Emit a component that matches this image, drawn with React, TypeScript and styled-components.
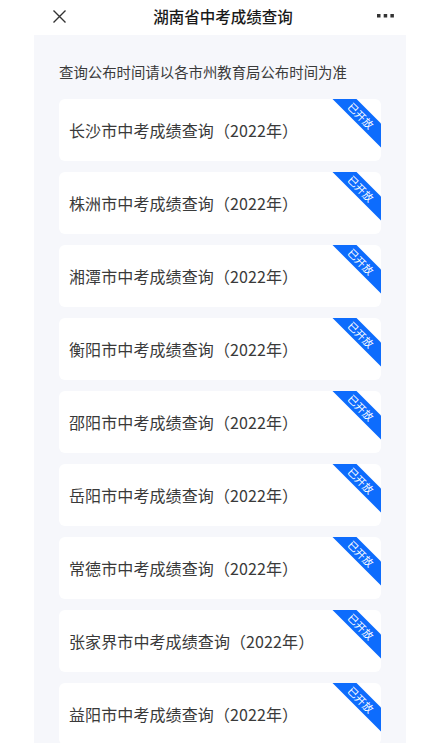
import styled, { createGlobalStyle } from "styled-components";

const GlobalStyle = createGlobalStyle`
  html, body {
    margin: 0;
    padding: 0;
    background: #ffffff;
    overflow: hidden;
  }
  body {
    font-family: "Noto Sans CJK SC", "Noto Sans", "Liberation Sans", sans-serif;
    color: #333333;
  }
`;

const Page = styled.div`
  width: 422px;
  height: 743px;
  display: flex;
  flex-direction: column;
`;

const Header = styled.header`
  height: 35px;
  display: grid;
  grid-template-columns: 1fr auto 1fr;
  align-items: center;
  padding: 0 28px 0 52px;
  flex-shrink: 0;
`;

const Title = styled.h1`
  margin: -3px 0 0;
  font-size: 15.5px;
  font-weight: 500;
  color: #1a1a1a;
  line-height: 20px;
`;

const IconButton = styled.div<{ $align: "start" | "end" }>`
  display: flex;
  justify-content: ${(p) => (p.$align === "start" ? "flex-start" : "flex-end")};
  align-items: center;
  margin-top: -3px;
`;

const Panel = styled.main`
  margin: 0 16px 0 34px;
  background: #f6f7fb;
  padding: 27px 25px 0 25px;
  flex: 1;
  display: flex;
  flex-direction: column;
`;

const Notice = styled.p`
  margin: 0 0 17px;
  font-size: 14.4px;
  line-height: 20px;
  color: #3a3a3a;
`;

const CardList = styled.div`
  display: flex;
  flex-direction: column;
  gap: 11px;
`;

const Card = styled.div`
  position: relative;
  height: 62px;
  background: #ffffff;
  border-radius: 6px;
  overflow: hidden;
  display: flex;
  align-items: center;
  padding-left: 10px;
  flex-shrink: 0;
`;

const CardTitle = styled.span`
  font-size: 16px;
  color: #3a3a3a;
  letter-spacing: 0.1px;
`;

const Ribbon = styled.div`
  position: absolute;
  top: 8px;
  right: -22px;
  width: 84px;
  height: 17px;
  background: #0d6cfd;
  color: #ffffff;
  font-size: 10.5px;
  line-height: 17px;
  text-align: center;
  transform: rotate(45deg);
`;

const cities = [
  "长沙市",
  "株洲市",
  "湘潭市",
  "衡阳市",
  "邵阳市",
  "岳阳市",
  "常德市",
  "张家界市",
  "益阳市",
];

function CloseIcon() {
  return (
    <svg width="15" height="15" viewBox="0 0 15 15">
      <path d="M1.5 1.5 L13.5 13.5 M13.5 1.5 L1.5 13.5" stroke="#333" strokeWidth="1.4" fill="none" />
    </svg>
  );
}

function MoreIcon() {
  return (
    <svg width="17" height="4" viewBox="0 0 17 4">
      <rect x="0" y="0" width="3.5" height="3.5" fill="#333" />
      <rect x="6.7" y="0" width="3.5" height="3.5" fill="#333" />
      <rect x="13.4" y="0" width="3.5" height="3.5" fill="#333" />
    </svg>
  );
}

export default function App() {
  return (
    <Page>
      <GlobalStyle />
      <Header>
        <IconButton $align="start">
          <CloseIcon />
        </IconButton>
        <Title>湖南省中考成绩查询</Title>
        <IconButton $align="end">
          <MoreIcon />
        </IconButton>
      </Header>
      <Panel>
        <Notice>查询公布时间请以各市州教育局公布时间为准</Notice>
        <CardList>
          {cities.map((city) => (
            <Card key={city}>
              <CardTitle>{city}中考成绩查询（2022年）</CardTitle>
              <Ribbon>已开放</Ribbon>
            </Card>
          ))}
        </CardList>
      </Panel>
    </Page>
  );
}
